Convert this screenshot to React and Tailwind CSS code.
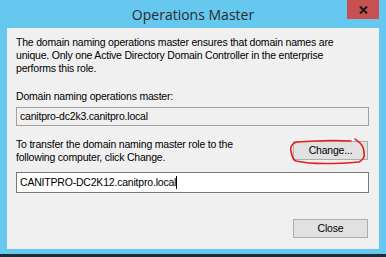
import React from 'react';

const font = { fontFamily: '"Liberation Sans", Arial, sans-serif' };

const WinButton = ({ children }) => (
  <button className="w-[75px] h-[19px] border border-[#adadad] bg-[#e1e1e1] text-[10.5px] tracking-[-0.2px] text-black leading-none">
    {children}
  </button>
);

export default function App() {
  return (
    <div className="w-[386px] h-[257px] bg-[#66c8ee] flex flex-col overflow-hidden" style={font}>
      <div className="h-[28px] grid grid-cols-[1fr_auto_1fr] items-start">
        <div />
        <div className="pt-[4px] text-[14px] text-[#2b2b2b]" style={{ fontFamily: '"Open Sans", "Noto Sans", sans-serif' }}>
          Operations Master
        </div>
        <div className="flex justify-end pr-[7px]">
          <div className="w-[32px] h-[19px] bg-[#c75050] flex items-center justify-center">
            <svg width="9" height="8" viewBox="0 0 9 8">
              <path d="M1 0.5 L8 7.5 M8 0.5 L1 7.5" stroke="#1a1a1a" strokeWidth="2" />
            </svg>
          </div>
        </div>
      </div>

      <div className="mx-[7px] h-[221px] bg-[#f0f0f0] pl-[9px] pr-[10px] pt-[8px] flex flex-col text-[10.5px] tracking-[-0.2px] text-black leading-[13px]">
        <p className="w-[322px]">
          The domain naming operations master ensures that domain names are unique. Only one Active Directory Domain Controller in the enterprise performs this role.
        </p>
        <p className="mt-[15px]">Domain naming operations master:</p>
        <div className="mt-[4px] h-[19px] border border-[#a0a0a0] bg-[#f0f0f0] pl-[3px] flex items-center">
          canitpro-dc2k3.canitpro.local
        </div>
        <div className="mt-[12px] flex items-start justify-between">
          <p className="w-[250px]">To transfer the domain naming master role to the following computer, click Change.</p>
          <div className="relative mt-[3px] mr-[1px]">
            <WinButton>Change...</WinButton>
            <svg className="absolute left-[-4px] top-[-3px]" width="80" height="28" viewBox="0 0 80 28" fill="none">
              <path
                d="M62 3 C45 2 20 3 8 4 C3 5 1 9 2 13 C3 19 4 22 7 23 C20 26 45 26 70 24 C74 22 76 19 75 15 C75 11 74 8 71 5 C69 3 67 2 66 1"
                stroke="#e01f1f"
                strokeWidth="1.6"
                strokeLinecap="round"
              />
            </svg>
          </div>
        </div>
        <div className="mt-[8px] h-[21px] border border-[#7a7a7a] bg-white pl-[3px] flex items-center">
          CANITPRO-DC2K12.canitpro.local<span className="inline-block w-px h-[13px] bg-black" />
        </div>
        <div className="mt-auto mb-[11px] flex justify-end pr-[1px]">
          <WinButton>Close</WinButton>
        </div>
      </div>
      <div className="h-[5px]" />
      <div className="flex-1 bg-[#1d2c36]" />
    </div>
  );
}
